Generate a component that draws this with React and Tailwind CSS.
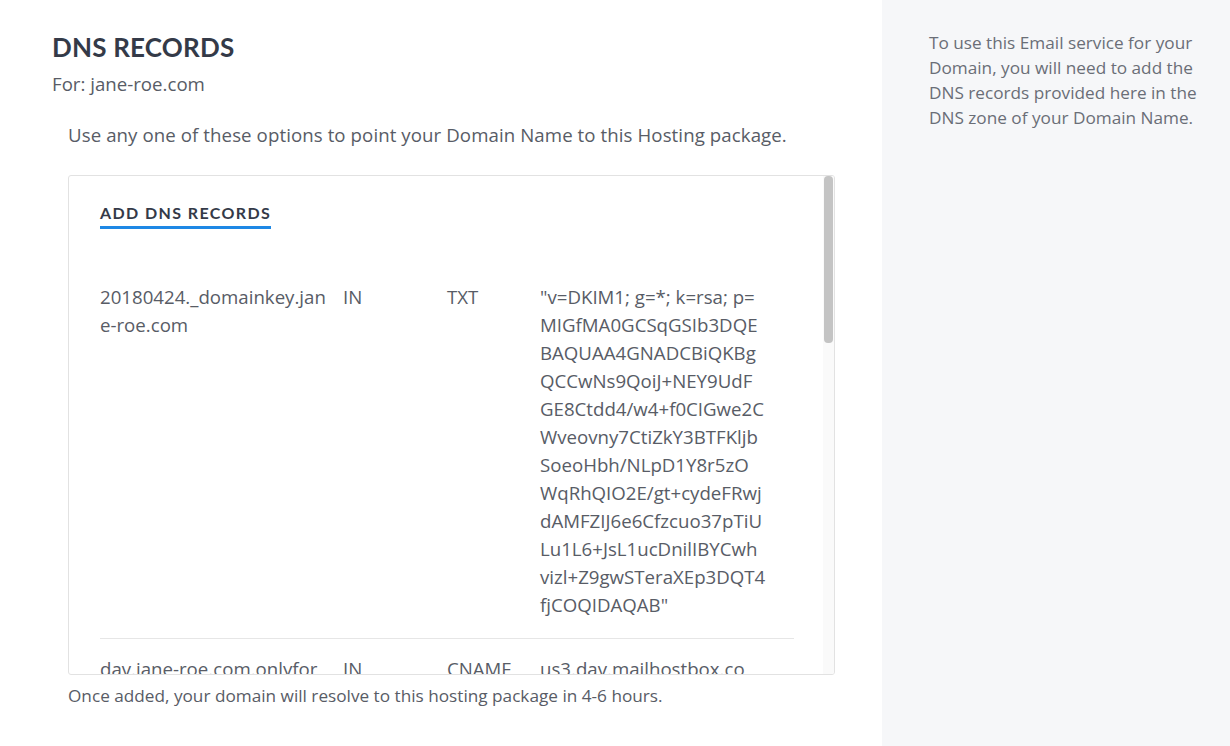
import React from 'react';

const records = [
  {
    host: ['20180424._domainkey.jan', 'e-roe.com'],
    cls: 'IN',
    type: 'TXT',
    value: [
      '"v=DKIM1; g=*; k=rsa; p=',
      'MIGfMA0GCSqGSIb3DQE',
      'BAQUAA4GNADCBiQKBg',
      'QCCwNs9QoiJ+NEY9UdF',
      'GE8Ctdd4/w4+f0CIGwe2C',
      'Wveovny7CtiZkY3BTFKljb',
      'SoeoHbh/NLpD1Y8r5zO',
      'WqRhQIO2E/gt+cydeFRwj',
      'dAMFZIJ6e6Cfzcuo37pTiU',
      'Lu1L6+JsL1ucDnilIBYCwh',
      'vizl+Z9gwSTeraXEp3DQT4',
      'fjCOQIDAQAB"',
    ],
  },
  {
    host: ['dav.jane-roe.com.onlyfor'],
    cls: 'IN',
    type: 'CNAME',
    value: ['us3.dav.mailhostbox.co'],
  },
];

function RecordRow({ record, last }) {
  return (
    <div className={`grid grid-cols-[243px_104px_93px_253px] pt-[16px] pb-[19px] whitespace-nowrap ${last ? '' : 'border-b border-[#e6e6e6]'}`}>
      <div>{record.host.map((l, i) => <div key={i}>{l}</div>)}</div>
      <div>{record.cls}</div>
      <div>{record.type}</div>
      <div>{record.value.map((l, i) => <div key={i}>{l}</div>)}</div>
    </div>
  );
}

export default function App() {
  return (
    <div className="flex w-[1230px] h-[746px] overflow-hidden bg-white text-[#585c66] font-['Open_Sans',sans-serif]">
      {/* Main */}
      <div className="w-[882px] shrink-0 pl-[52px] pt-[32px]">
        <h1 className="text-[26px] leading-[30px] font-bold text-[#343a48] tracking-[0.2px] font-['Lato',sans-serif]">
          DNS RECORDS
        </h1>
        <p className="mt-[9px] text-[18.67px] leading-[26px]">For: jane-roe.com</p>

        <div className="pl-[16px]">
          <p className="mt-[25px] text-[18.67px] leading-[26px] tracking-[0.08px]">
            Use any one of these options to point your Domain Name to this Hosting package.
          </p>

          <div className="mt-[27px] w-[767px] h-[500px] border border-[#e2e2e2] rounded-[3px] flex overflow-hidden">
            <div className="flex-1 pl-[31px] pr-[29px] pt-[25px] overflow-hidden">
              <div className="inline-block border-b-[3px] border-[#1e88e5] pb-[3px]">
                <span className="block text-[16px] leading-[20px] font-bold tracking-[1.4px] text-[#343a48] font-['Lato',sans-serif]">
                  ADD DNS RECORDS
                </span>
              </div>
              <div className="mt-[38px] text-[18.67px] leading-[28px]">
                {records.map((r, i) => (
                  <RecordRow key={i} record={r} last={i === records.length - 1} />
                ))}
              </div>
            </div>
            <div className="w-[11px] shrink-0 bg-[#fafafa] pl-[1px]">
              <div className="w-[9px] h-[167px] rounded-[4px] bg-[#c4c4c4]" />
            </div>
          </div>

          <p className="mt-[9px] text-[17.2px] leading-[24px]">
            Once added, your domain will resolve to this hosting package in 4-6 hours.
          </p>
        </div>
      </div>

      {/* Sidebar */}
      <div className="flex-1 bg-[#f6f7f9] pl-[47px] pt-[30px]">
        <p className="w-[280px] text-[17.2px] leading-[25px] text-[#6a6e77]">
          To use this Email service for your Domain, you will need to add the DNS records provided here in the DNS zone of your Domain Name.
        </p>
      </div>
    </div>
  );
}
